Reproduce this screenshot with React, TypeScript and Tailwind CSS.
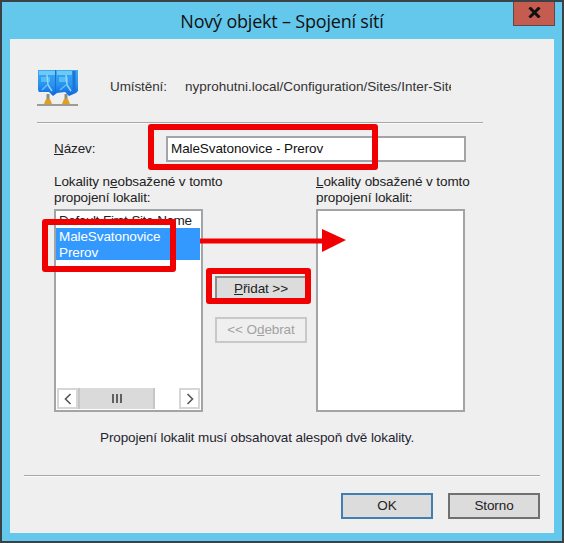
const BODY_FONT = "font-['Liberation_Sans',Arial,sans-serif]";

function SiteIcon() {
  return (
    <svg width="42" height="38" viewBox="0 0 42 38" className="shrink-0">
      <defs>
        <linearGradient id="cube" x1="0" y1="0" x2="0" y2="1">
          <stop offset="0" stopColor="#3fa8f2" />
          <stop offset="0.55" stopColor="#2a94ee" />
          <stop offset="1" stopColor="#0f66e0" />
        </linearGradient>
      </defs>
      <path d="M1 1h19v23l-4 3-4-4H2l-1-2z" fill="url(#cube)" />
      <path d="M18 1h23v21l-2 2-7 3-4-4-8 1-2-2z" fill="url(#cube)" />
      <path d="M2 2h16v4H2zM20 2h15v4H20z" fill="#6ccaf6" />
      <path d="M4 8h9v5H4zM22 8h9v5H22z" fill="#55bdf5" />
      <path d="M10 6l1 10 4 6M29 6l1 10 4 6" stroke="#8fd6f8" strokeWidth="1.5" fill="none" />
      <path d="M5 21l5-5M23 21l6-5" stroke="#62c0f4" strokeWidth="1.5" fill="none" />
      <path d="M37 2v20" stroke="#1f72d8" strokeWidth="3" />
      <path d="M18.5 1v24" stroke="#1a6fd0" strokeWidth="1" />
      <path d="M9.5 25h3v5h-3zM27.5 25h3v5h-3z" fill="#8e8e86" />
      <path d="M7 35l2-5h4l2 5zM25 35l2-5h4l2 5z" fill="#dfa020" />
      <path d="M0 36h41" stroke="#9c9c94" strokeWidth="2" />
    </svg>
  );
}

function Etched({ className = "" }: { className?: string }) {
  return <div className={`h-[2px] border-t border-[#a8a8a8] bg-white/70 box-border ${className}`} />;
}

function Listbox({ children }: { children?: React.ReactNode }) {
  return (
    <div className="w-[149px] h-[203px] border-2 border-[#a2a5a8] bg-white flex flex-col box-border">
      {children}
    </div>
  );
}

function ScrollBar() {
  return (
    <div className="h-[21px] mx-[1px] mb-[1px] flex bg-white">
      <div className="w-[21px] border-2 border-[#d6d6d6] flex items-center justify-center box-border">
        <svg width="8" height="12" viewBox="0 0 8 12">
          <path d="M6.5 1L1.5 6l5 5" stroke="#555" strokeWidth="1.6" fill="none" />
        </svg>
      </div>
      <div className="w-[77px] bg-[#dadada] border-x-2 border-[#c6c6c6] flex items-center justify-center gap-[2px] box-border">
        <span className="w-[2px] h-[9px] bg-[#606060]" />
        <span className="w-[2px] h-[9px] bg-[#606060]" />
        <span className="w-[2px] h-[9px] bg-[#606060]" />
      </div>
      <div className="flex-1" />
      <div className="w-[21px] border-2 border-[#d6d6d6] flex items-center justify-center box-border">
        <svg width="8" height="12" viewBox="0 0 8 12">
          <path d="M1.5 1l5 5-5 5" stroke="#555" strokeWidth="1.6" fill="none" />
        </svg>
      </div>
    </div>
  );
}

function DialogButton({
  children,
  className = "",
}: {
  children: React.ReactNode;
  className?: string;
}) {
  return (
    <div
      className={`w-[92px] h-[26px] border-2 flex items-center justify-center text-[13.5px] box-border ${className}`}
    >
      {children}
    </div>
  );
}

export default function App() {
  return (
    <div className={`${BODY_FONT} relative w-[564px] h-[543px] overflow-hidden bg-[#63c8ec] border-2 border-[#3b4246] box-border flex flex-col text-[13.5px] tracking-[-0.1px] text-[#222]`}>
      {/* Title bar */}
      <div className="h-[37px] shrink-0 grid grid-cols-[1fr_auto_1fr]">
        <div />
        <div className="pt-[6px] text-[18px] leading-[26px] font-['Open_Sans',sans-serif] text-[#111] tracking-[-0.2px]">
          Nový objekt – Spojení sítí
        </div>
        <div className="flex justify-end pr-[7px]">
          <div className="w-[42px] h-[26px] -mt-[2px] bg-[#c65b50] border-x border-b border-[#5a4a48] flex items-center justify-center box-border">
            <svg width="13" height="11" viewBox="0 0 13 11">
              <path d="M1.5 .5l10 10M11.5 .5l-10 10" stroke="#111" strokeWidth="3" />
            </svg>
          </div>
        </div>
      </div>

      {/* Client area */}
      <div className="w-[544px] h-[494px] ml-[8px] bg-[#efefef] pt-[30px] pl-[27px] box-border">
        <div className="flex h-[38px] items-center w-[446px]">
          <SiteIcon />
          <span className="ml-[31px] w-[75px] shrink-0 -mt-[2px] text-[#333]">Umístění:</span>
          <span className="w-[266px] overflow-hidden whitespace-nowrap -mt-[2px] text-[#333] tracking-normal">
            nyprohutni.local/Configuration/Sites/Inter-Site
          </span>
        </div>

        <Etched className="w-[446px] mt-[15px]" />

        <div className="flex items-center mt-[12px] ml-[17px]">
          <span className="w-[112px] pt-[1px]">
            <u>N</u>ázev:
          </span>
          <div className="w-[300px] h-[26px] bg-white border-2 border-[#a2a5a8] flex items-center pl-[3px] box-border text-[#111]">
            MaleSvatonovice - Prerov
          </div>
        </div>

        <div className="flex ml-[17px] mt-[11px]">
          <div className="w-[149px]">
            <div className="leading-[16px] h-[36px] pt-[1px] whitespace-nowrap">
              Lokality n<u>e</u>obsažené v tomto
              <br />
              propojení lokalit:
            </div>
            <Listbox>
              <div className="h-[17px] pl-[3px] leading-[19px] whitespace-nowrap tracking-[-0.4px]">Default-First-Site-Name</div>
              <div className="w-[144px] h-[32px] bg-[#3399ff] text-white pl-[3px] leading-[16px] pt-[1px]">
                MaleSvatonovice
                <br />
                Prerov
              </div>
              <div className="flex-1" />
              <ScrollBar />
            </Listbox>
          </div>

          <div className="w-[113px] pl-[12px] pt-[103px] flex flex-col gap-[15px]">
            <DialogButton className="bg-[#dcdcdc] border-[#8c8c8c]">
              <span>
                <u>P</u>řidat &gt;&gt;
              </span>
            </DialogButton>
            <DialogButton className="border-[#c8c8c8] text-[#a2a2a2]">
              <span>
                &lt;&lt; O<u>d</u>ebrat
              </span>
            </DialogButton>
          </div>

          <div className="w-[149px]">
            <div className="leading-[16px] h-[36px] pt-[1px] whitespace-nowrap">
              <u>L</u>okality obsažené v tomto
              <br />
              propojení lokalit:
            </div>
            <Listbox />
          </div>
        </div>

        <div className="ml-[63px] mt-[17px] leading-[18px] text-[#1f2530] whitespace-nowrap">
          Propojení lokalit musí obsahovat alespoň dvě lokality.
        </div>

        <Etched className="w-[516px] -ml-[13px] mt-[28px]" />

        <div className="flex justify-end gap-[15px] mt-[16px] w-[503px]">
          <DialogButton className="bg-[#dcdcdc] border-[#3f7fb3]">OK</DialogButton>
          <DialogButton className="bg-[#dcdcdc] border-[#707070]">Storno</DialogButton>
        </div>
      </div>

      {/* Red annotations drawn over the dialog */}
      <div className="absolute left-[146px] top-[122px] w-[230px] h-[46px] border-[6px] rounded-[3px] border-[#f00000] box-border" />
      <div className="absolute left-[40px] top-[217px] w-[134px] h-[53px] border-[6px] rounded-[3px] border-[#f00000] box-border" />
      <div className="absolute left-[204px] top-[266px] w-[105px] h-[36px] border-[6px] rounded-[3px] border-[#f00000] box-border" />
      <svg className="absolute left-[198px] top-[226px]" width="148" height="26" viewBox="0 0 148 26">
        <path d="M0 13h122" stroke="#f00000" strokeWidth="5" />
        <path d="M122 1l24 11-24 12z" fill="#f00000" />
      </svg>
    </div>
  );
}
